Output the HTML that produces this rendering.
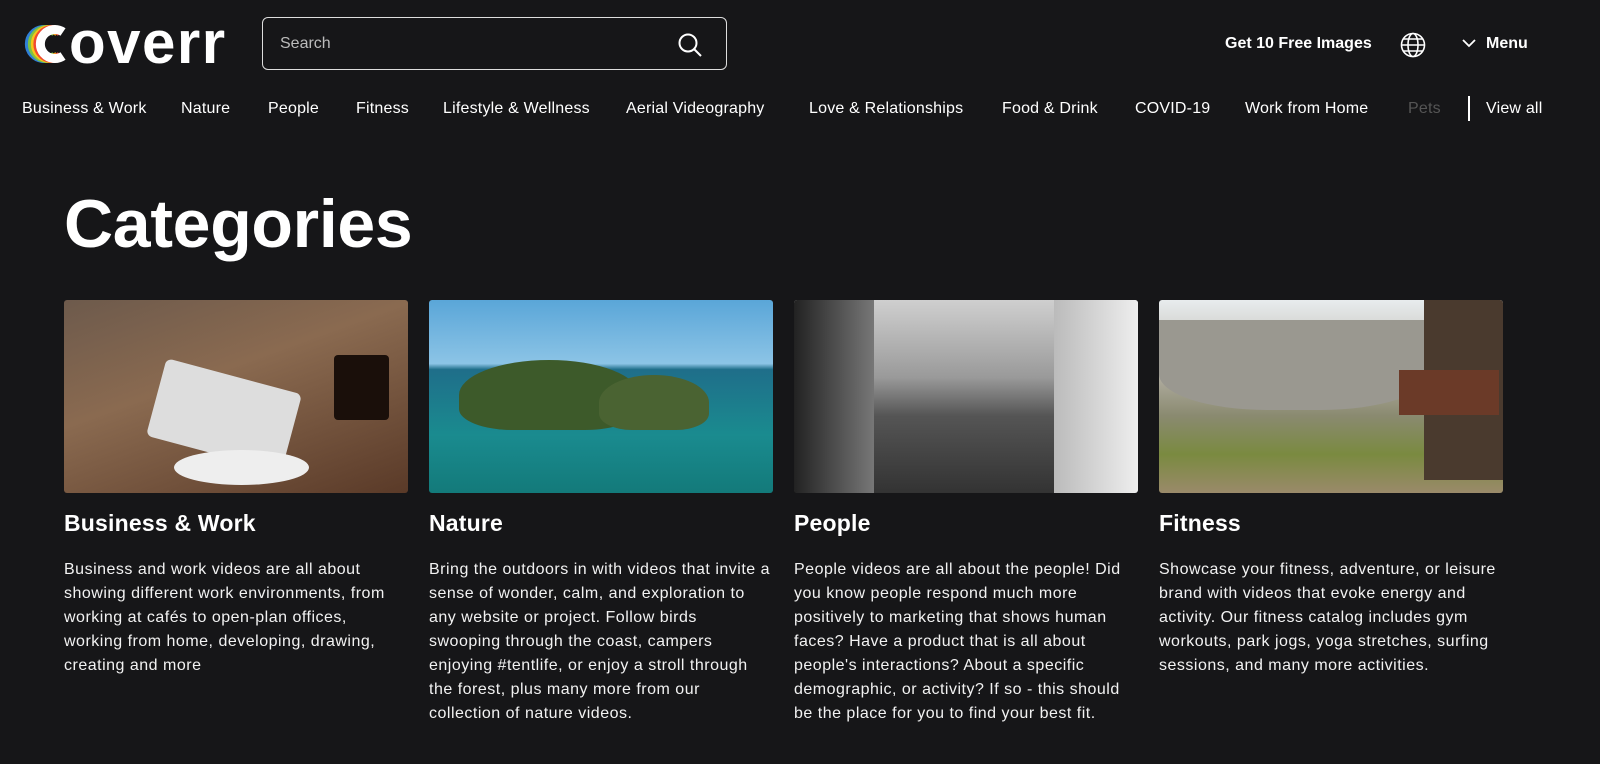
<!DOCTYPE html>
<html><head><meta charset="utf-8"><style>
*{margin:0;padding:0;box-sizing:border-box}
body{width:1600px;height:764px;overflow:hidden;background:#161618;color:#fff;font-family:"Liberation Sans",sans-serif;position:relative}
.abs{position:absolute}
.nav a{position:absolute;top:100px;font-size:16px;color:#fff;white-space:nowrap;letter-spacing:0.2px}
.card{position:absolute;top:300px;width:344px}
.img{height:193px;border-radius:3px;overflow:hidden;position:relative}
.card h2{font-size:23px;font-weight:bold;margin-top:16px;line-height:28px;letter-spacing:0.2px}
.card p{font-size:16px;line-height:24px;margin-top:21px;color:#f2f2f2;letter-spacing:0.5px}
</style></head><body>
<svg class="abs" style="left:0;top:0" width="80" height="80" viewBox="0 0 80 80" fill="none" stroke-width="9">
<path d="M63 32 A14.5 14.5 0 1 0 63 56" stroke="#2f7fd6" transform="translate(-11 0)"/>
<path d="M63 32 A14.5 14.5 0 1 0 63 56" stroke="#7dc242" transform="translate(-8 0)"/>
<path d="M63 32 A14.5 14.5 0 1 0 63 56" stroke="#f5c518" transform="translate(-5 0)"/>
<path d="M63 32 A14.5 14.5 0 1 0 63 56" stroke="#f0492f" transform="translate(-2.5 0)"/>
<path d="M63 32 A14.5 14.5 0 1 0 63 56" stroke="#fff"/>
</svg>
<div class="abs" style="left:69px;top:5px;font-size:60px;font-weight:bold;letter-spacing:1.5px;line-height:76px;color:#fff">overr</div>
<div class="abs" style="left:262px;top:17px;width:465px;height:53px;border:1px solid #ddd;border-radius:6px;background:#161618">
<span class="abs" style="left:17px;top:17px;font-size:16px;color:#bbb">Search</span>
<svg class="abs" style="left:414px;top:14px" width="26" height="26" viewBox="0 0 26 26" fill="none" stroke="#fff" stroke-width="2"><circle cx="11" cy="11" r="8.5"/><path d="M17.5 17.5L24 24"/></svg>
</div>
<div class="abs" style="left:1225px;top:35px;font-size:16px;font-weight:bold">Get 10 Free Images</div>
<svg class="abs" style="left:1400px;top:32px" width="26" height="26" viewBox="0 0 26 26" fill="none" stroke="#fff" stroke-width="1.6"><circle cx="13" cy="13" r="11.5"/><ellipse cx="13" cy="13" rx="5" ry="11.5"/><path d="M1.5 13h23M3.5 7h19M3.5 19h19"/></svg>
<svg class="abs" style="left:1461px;top:38px" width="16" height="10" viewBox="0 0 16 10" fill="none" stroke="#fff" stroke-width="1.8"><path d="M2 2l6 6 6-6"/></svg>
<div class="abs" style="left:1486px;top:35px;font-size:16px;font-weight:bold">Menu</div>
<div class="nav">
<a style="left:22px">Business &amp; Work</a><a style="left:181px">Nature</a><a style="left:268px">People</a><a style="left:356px">Fitness</a><a style="left:443px">Lifestyle &amp; Wellness</a><a style="left:626px">Aerial Videography</a><a style="left:809px">Love &amp; Relationships</a><a style="left:1002px">Food &amp; Drink</a><a style="left:1135px">COVID-19</a><a style="left:1245px">Work from Home</a><a style="left:1408px;color:#555">Pets</a>
<div class="abs" style="left:1468px;top:96px;width:2px;height:25px;background:#fff"></div>
<a style="left:1486px">View all</a>
</div>
<div class="abs" style="left:64px;top:185px;font-size:68px;font-weight:bold;letter-spacing:-0.3px">Categories</div>

<div class="card" style="left:64px"><div class="img" style="background:linear-gradient(160deg,#6d5a4c 0%,#8a6a50 40%,#5a3a28 100%)">
<div class="abs" style="left:90px;top:75px;width:140px;height:80px;background:#ddd;transform:rotate(15deg);border-radius:6px"></div>
<div class="abs" style="left:110px;top:150px;width:135px;height:35px;background:#eee;border-radius:50%"></div>
<div class="abs" style="left:270px;top:55px;width:55px;height:65px;background:#1a0f0a;border-radius:4px"></div>
</div><h2>Business &amp; Work</h2><p>Business and work videos are all about showing different work environments, from working at cafés to open-plan offices, working from home, developing, drawing, creating and more</p></div>

<div class="card" style="left:429px"><div class="img" style="background:linear-gradient(180deg,#5aa6d8 0%,#8cc4e6 33%,#1f6e8a 36%,#1a8b8f 70%,#137a7a 100%)">
<div class="abs" style="left:30px;top:60px;width:180px;height:70px;background:#3d5a2a;border-radius:50% 50% 30% 30%"></div>
<div class="abs" style="left:170px;top:75px;width:110px;height:55px;background:#4a6332;border-radius:50% 50% 30% 30%"></div>
</div><h2>Nature</h2><p>Bring the outdoors in with videos that invite a sense of wonder, calm, and exploration to any website or project. Follow birds swooping through the coast, campers enjoying #tentlife, or enjoy a stroll through the forest, plus many more from our collection of nature videos.</p></div>

<div class="card" style="left:794px"><div class="img" style="background:linear-gradient(180deg,#cfcfcf 0%,#9a9a9a 40%,#555 60%,#333 100%)">
<div class="abs" style="left:0;top:0;width:80px;height:193px;background:linear-gradient(90deg,#222,#777)"></div>
<div class="abs" style="left:260px;top:0;width:84px;height:193px;background:linear-gradient(90deg,#bbb,#eee)"></div>
</div><h2>People</h2><p>People videos are all about the people! Did you know people respond much more positively to marketing that shows human faces? Have a product that is all about people's interactions? About a specific demographic, or activity? If so - this should be the place for you to find your best fit.</p></div>

<div class="card" style="left:1159px"><div class="img" style="background:linear-gradient(180deg,#e8ecee 0%,#b8b4aa 35%,#8a8a70 60%,#7a8a40 80%,#9a8a6a 100%)">
<div class="abs" style="left:0;top:20px;width:270px;height:90px;background:#9a9890;border-radius:0 0 40% 40%"></div>
<div class="abs" style="left:265px;top:0;width:79px;height:180px;background:#4a3a2e"></div>
<div class="abs" style="left:240px;top:70px;width:100px;height:45px;background:#6b3a28"></div>
</div><h2>Fitness</h2><p>Showcase your fitness, adventure, or leisure brand with videos that evoke energy and activity. Our fitness catalog includes gym workouts, park jogs, yoga stretches, surfing sessions, and many more activities.</p></div>
</body></html>
